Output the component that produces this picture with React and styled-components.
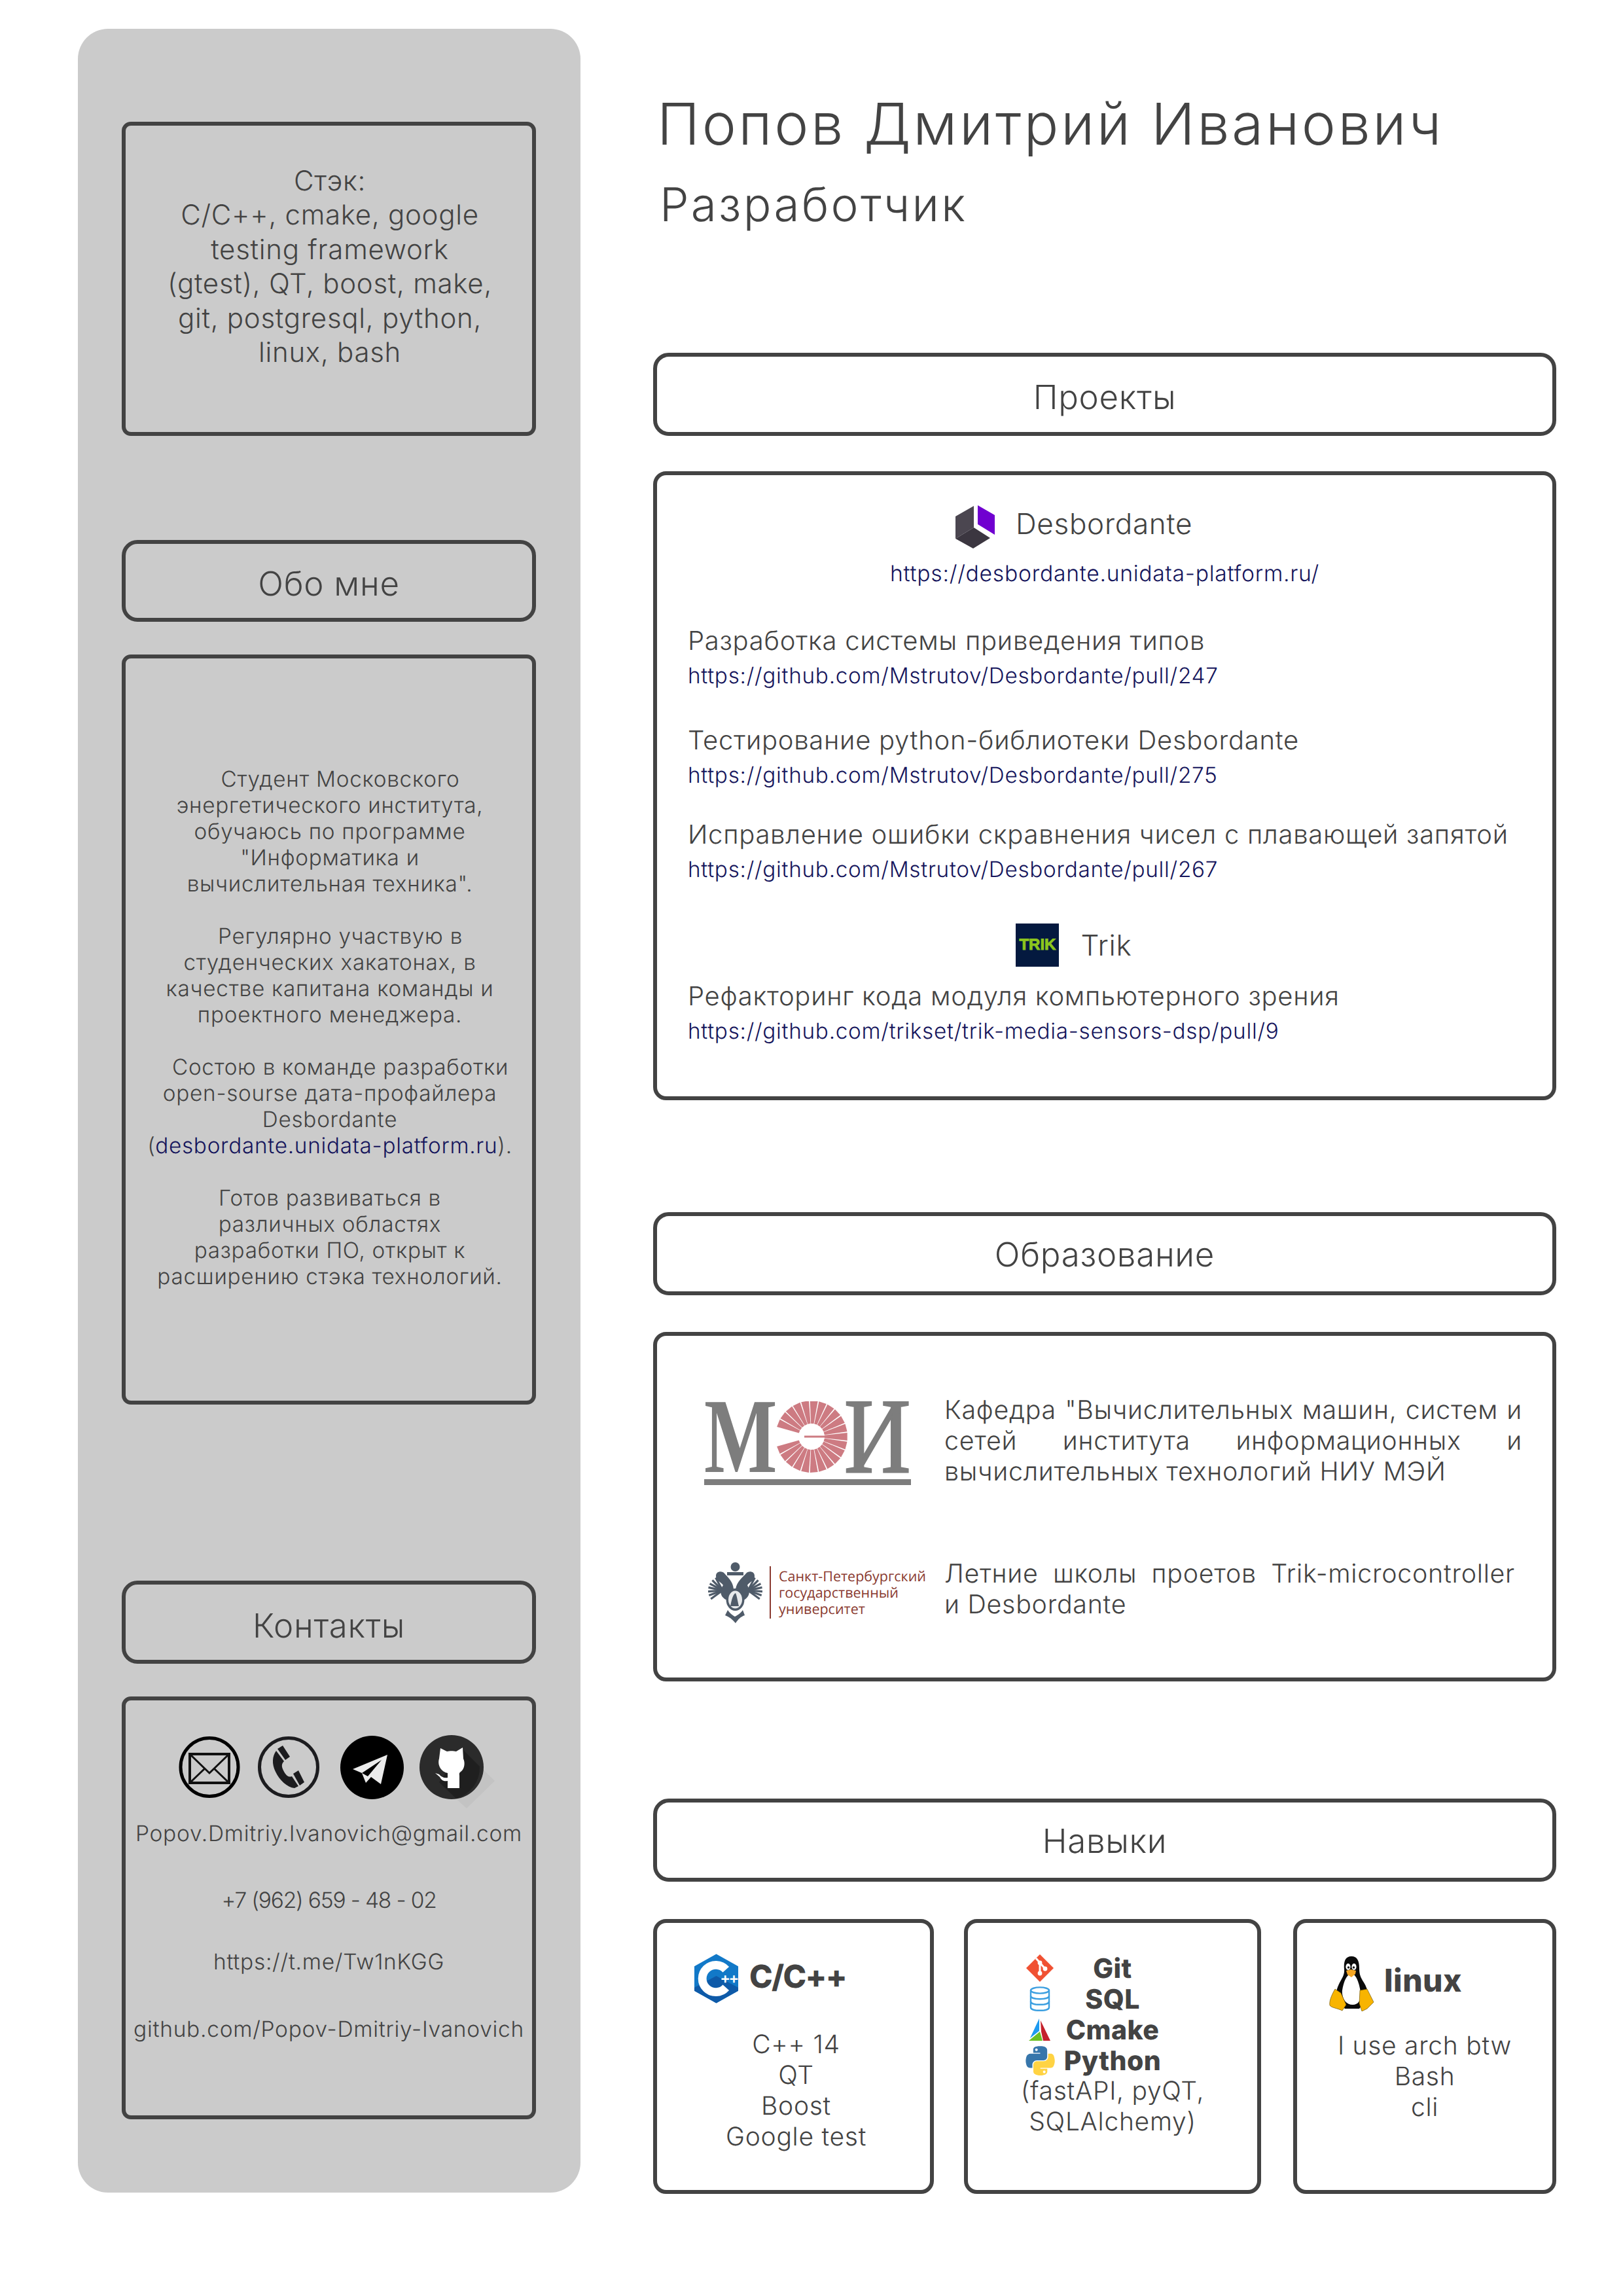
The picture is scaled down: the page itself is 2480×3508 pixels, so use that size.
import React from 'react'
import styled, { createGlobalStyle } from 'styled-components'

const INK = '#434343'
const NAVY = '#15155c'

const Global = createGlobalStyle`
  html, body { margin: 0; padding: 0; background: #fff; }
  body {
    font-family: Inter, "Noto Sans", "Liberation Sans", sans-serif;
    font-weight: 300;
    color: ${INK};
    letter-spacing: 0.045em;
    text-rendering: geometricPrecision;
  }
  * { box-sizing: border-box; }
`

const Page = styled.div`
  width: 2480px;
  height: 3508px;
  padding: 44px 0 0 119px;
  display: flex;
  align-items: flex-start;
  overflow: hidden;
`

const Sidebar = styled.aside`
  width: 768px;
  height: 3306px;
  flex: none;
  background: #cbcbcb;
  border-radius: 46px;
  padding: 142px 68px 0 67px;
  display: flex;
  flex-direction: column;
`

const Main = styled.main`
  width: 1380px;
  margin-left: 111px;
  flex: none;
  display: flex;
  flex-direction: column;
`

const Header = styled.header`
  height: 495px;
  padding: 96px 0 0 6px;
`

const Title = styled.h1`
  margin: 0;
  font-size: 88px;
  line-height: 100px;
  font-weight: 300;
  letter-spacing: 0.04em;
  white-space: nowrap;
`

const Subtitle = styled.h2`
  margin: 28px 0 0 4px;
  font-size: 71px;
  line-height: 90px;
  font-weight: 300;
  letter-spacing: 0.046em;
`

const Bar = styled.div`
  height: ${p => p.$h || 127}px;
  margin-top: ${p => p.$mt || 0}px;
  flex: none;
  border: 6px solid ${INK};
  border-radius: 24px;
  display: flex;
  align-items: center;
  justify-content: center;
  font-size: 51px;
  padding-top: ${p => p.$pt ?? 10}px;
`

const Panel = styled.section`
  height: ${p => p.$h}px;
  margin-top: ${p => p.$mt || 0}px;
  flex: none;
  border: 6px solid ${INK};
  border-radius: ${p => p.$r || 20}px;
`

const StackText = styled.div`
  padding: 59px 0 0 3px;
  text-align: center;
  font-size: 42px;
  line-height: 52.4px;
  white-space: nowrap;
`

const About = styled.div`
  padding: 165px 0 0 3px;
  text-align: center;
  font-size: 33.3px;
  line-height: 40px;
  white-space: nowrap;
`

const AboutPara = styled.p`
  margin: 0 0 40px;
  text-indent: ${p => p.$indent || 0}px;
`

const Anchor = styled.span`
  color: ${NAVY};
`

const IconRow = styled.div`
  display: flex;
  padding: 53px 0 0 81px;
  align-items: center;
`

const ContactIcon = styled.svg`
  width: ${p => p.$w || 94}px;
  height: ${p => p.$w || 94}px;
  margin-right: ${p => p.$gap || 0}px;
  flex: none;
  overflow: visible;
`

const ContactLine = styled.div`
  margin-top: ${p => p.$mt}px;
  height: 44px;
  line-height: 44px;
  text-align: center;
  font-size: 33.5px;
  letter-spacing: ${p => p.$ls || 'inherit'};
  white-space: nowrap;
`

const ProjectHead = styled.div`
  display: flex;
  align-items: center;
  justify-content: center;
  margin-top: ${p => p.$mt}px;
  height: ${p => p.$h}px;
  padding-right: 94px;
  gap: ${p => p.$gap}px;
  font-size: 44px;
`

const ProjectName = styled.span`
  margin-bottom: ${p => p.$mb || 0}px;
`

const SiteLink = styled.div`
  margin-top: 17px;
  line-height: 44px;
  text-align: center;
  font-size: 33.7px;
  color: ${NAVY};
`

const Task = styled.div`
  margin: ${p => p.$mt}px 0 0 47px;
`

const TaskTitle = styled.div`
  font-size: 40px;
  line-height: 50px;
  white-space: nowrap;
`

const TaskLink = styled.div`
  margin-top: 7px;
  font-size: 33.3px;
  line-height: 44px;
  color: ${NAVY};
  white-space: nowrap;
`

const EduRow = styled.div`
  display: grid;
  grid-template-columns: 439px 883px;
  margin-top: ${p => p.$mt}px;
`

const EduText = styled.div`
  margin-top: ${p => p.$mt || 0}px;
  font-size: 39.4px;
  line-height: 47px;
  text-align: justify;
`

const EduFullLine = styled.div`
  width: 872px;
  text-align: justify;
  text-align-last: justify;
  white-space: nowrap;
`

const MeiWrap = styled.svg`
  margin: 10px 0 0 72px;
  width: 316px;
  height: 128px;
  display: block;
`

const SpbuLogo = styled.div`
  display: flex;
  align-items: center;
  margin-left: 78px;
  height: 94px;
`

const Divider = styled.div`
  width: 2px;
  height: 80px;
  margin: 0 12px 0 11px;
  background: #8a3a30;
`

const SpbuName = styled.div`
  font-family: "Open Sans", sans-serif;
  font-weight: 400;
  font-size: 21.5px;
  line-height: 25px;
  letter-spacing: 0;
  color: #8a3a30;
  white-space: nowrap;
`

const SkillGrid = styled.div`
  display: flex;
  margin-top: 57px;
`

const SkillCard = styled.div`
  width: ${p => p.$w}px;
  height: 420px;
  margin-left: ${p => p.$ml || 0}px;
  flex: none;
  border: 6px solid ${INK};
  border-radius: 20px;
`

const SkillHead = styled.div`
  display: flex;
  align-items: center;
  padding: ${p => p.$pt}px 0 0 ${p => p.$pl}px;
  gap: ${p => p.$gap}px;
  font-size: 48px;
  font-weight: 800;
  letter-spacing: ${p => p.$ls};
  white-space: nowrap;
`

const SkillName = styled.span`
  margin-bottom: ${p => p.$mb}px;
`

const SkillList = styled.div`
  margin-top: ${p => p.$mt}px;
  padding-left: ${p => p.$pl || 0}px;
  text-align: center;
  font-size: 39px;
  line-height: 47px;
`

const ToolList = styled.div`
  padding: 44px 0 0 87px;
`

const ToolRow = styled.div`
  display: grid;
  grid-template-columns: 46px 176px;
  height: 47px;
  align-items: center;
  justify-items: center;
  font-size: 41px;
  font-weight: 800;
  letter-spacing: 0.01em;
  white-space: nowrap;
`

const ToolNote = styled.div`
  margin: 1px 0 0 -87px;
  text-align: center;
  font-size: 39px;
  line-height: 47px;
  white-space: nowrap;
`

const TrikBadge = styled.div`
  width: 66px;
  height: 66px;
  background: #04193f;
  color: #8cc51e;
  display: flex;
  align-items: center;
  justify-content: center;
  font-family: "Liberation Sans", sans-serif;
  font-weight: 700;
  font-size: 24px;
  letter-spacing: 0;
  -webkit-text-stroke: 1px #8cc51e;
`

const CppLogo = () => (
  <svg width="69" height="76" viewBox="0 0 70 76">
    <polygon points="35,0 69,19 69,57 35,76 1,57 1,19" fill="#1279c8" />
    <polygon points="1,52 35,34 69,52 69,57 35,76 1,57" fill="#0e5aa8" />
    <path d="M50 24 A21 21 0 1 0 50 52" fill="none" stroke="#fff" strokeWidth="13" />
    <text x="42" y="46" fontFamily="Liberation Sans" fontWeight="700" fontSize="22" letterSpacing="0" fill="#fff" textLength="27" lengthAdjust="spacingAndGlyphs">++</text>
  </svg>
)

const GitLogo = () => (
  <svg width="42" height="42" viewBox="0 0 42 42">
    <polygon points="21,0 42,21 21,42 0,21" fill="#f05133" />
    <path d="M15 6 L29 22 M21 13 V28" stroke="#fff" strokeWidth="3" fill="none" />
    <circle cx="21" cy="13" r="3.4" fill="#fff" />
    <circle cx="21" cy="29" r="3.4" fill="#fff" />
    <circle cx="29" cy="22" r="3.4" fill="#fff" />
  </svg>
)

const SqlLogo = () => (
  <svg width="32" height="38" viewBox="0 0 32 38" fill="none" stroke="#3c9fe0" strokeWidth="2.4">
    <ellipse cx="16" cy="6" rx="14" ry="4.6" />
    <path d="M2 6V32C2 35 8 36.8 16 36.8S30 35 30 32V6" />
    <path d="M2 14.5C2 17.5 8 19.2 16 19.2S30 17.5 30 14.5" />
    <path d="M2 23C2 26 8 27.8 16 27.8S30 26 30 23" />
  </svg>
)

const CmakeLogo = () => (
  <svg width="34" height="34" viewBox="0 0 34 34">
    <polygon points="16,0 16,19 2,30" fill="#1e9af0" />
    <polygon points="18,3 33,34 22,34 19,20" fill="#c4212b" />
    <polygon points="17,20 21,34 0,34" fill="#6cc024" />
  </svg>
)

const PythonLogo = () => (
  <svg width="45" height="45" viewBox="0 0 110 110">
    <path fill="#3776ab" d="M54.9 .9C50.3 .9 45.9 1.3 42.1 2 30.9 4 28.9 8.1 28.9 15.7v10h26v3.3H19.1c-7.6 0-14.2 4.6-16.3 13.2C.4 52.1 .3 58.3 2.8 68.7c1.8 7.7 6.3 13.2 13.9 13.2h9v-12c0-8.7 7.5-16.3 16.3-16.3h26c7.2 0 13-6 13-13.2V15.7c0-7.1-6-12.4-13-13.6C63 1.3 59.4 .9 54.9 .9zM40.8 9c2.7 0 4.9 2.2 4.9 5s-2.2 4.9-4.9 4.9c-2.7 0-4.9-2.2-4.9-4.9s2.2-5 4.9-5z" />
    <path fill="#ffd343" d="M84.7 29v11.6c0 9-7.6 16.5-16.3 16.5h-26c-7.1 0-13 6.1-13 13.2v24.8c0 7.1 6.1 11.2 13 13.2 8.3 2.4 16.2 2.9 26 0 6.6-1.9 13-5.7 13-13.2v-10h-26v-3.3h39c7.6 0 10.4-5.3 13-13.2 2.7-8.2 2.6-16 0-26.4-1.9-7.5-5.4-13.2-13-13.2h-9.7zM70.1 91.7c2.7 0 4.9 2.2 4.9 4.9 0 2.8-2.2 5-4.9 5-2.7 0-4.9-2.2-4.9-5 0-2.7 2.2-4.9 4.9-4.9z" />
  </svg>
)

const LinuxLogo = () => (
  <svg width="69" height="84" viewBox="0 0 69 84">
    <path fill="#0b0b0b" d="M34 0C24 0 22 9 23 20 24 30 17 36 13 47 10 55 10 62 14 68L24 80H46L58 66C61 58 58 48 53 40 48 32 46 28 46 18 46 7 43 0 34 0Z" />
    <path fill="#fff" d="M34 26C26 28 22 40 20 52 19 62 24 74 36 74 46 74 50 64 48 54 46 42 42 28 34 26Z" />
    <ellipse cx="29" cy="16" rx="3.6" ry="5" fill="#fff" />
    <ellipse cx="38" cy="16" rx="3.6" ry="5" fill="#fff" />
    <circle cx="29.5" cy="17" r="1.7" fill="#111" />
    <circle cx="37.5" cy="17" r="1.7" fill="#111" />
    <path fill="#f5a623" d="M26 22 33 20 41 22 40 27 34 32 28 28Z" />
    <path fill="#f8b400" stroke="#5a4500" strokeWidth=".6" d="M9 50 18 56 26 74 20 83C12 79 4 79 1 75 0 70 2 62 9 50Z" />
    <path fill="#f8b400" stroke="#5a4500" strokeWidth=".6" d="M47 52 58 50 63 60 68 70 58 80 50 84 46 72Z" />
  </svg>
)

const DesbordanteLogo = () => (
  <svg width="60" height="66" viewBox="0 0 60 66">
    <polygon points="0,17 28,1 28,34 0,51" fill="#4b4650" />
    <polygon points="0,51 28,34 53,50 27,66" fill="#3b3640" />
    <polygon points="34,0 60,15 60,45 34,29" fill="#7000d0" />
  </svg>
)

const MailIcon = () => (
  <ContactIcon viewBox="0 0 94 94" $gap={27}>
    <ellipse cx="47" cy="47" rx="44" ry="44.5" fill="none" stroke="#000" strokeWidth="5" />
    <rect x="17" y="27" width="60" height="44" fill="none" stroke="#111" strokeWidth="4" />
    <path d="M18 28 L47 56 L76 28 M18 70 L40 49 M76 70 L54 49" fill="none" stroke="#111" strokeWidth="3" />
  </ContactIcon>
)

const PhoneIcon = () => (
  <ContactIcon viewBox="0 0 94 94" $gap={32}>
    <ellipse cx="47" cy="47" rx="44.5" ry="44.5" fill="none" stroke="#1c1c1f" strokeWidth="5" />
    <path d="M28 22C22 30 21 42 27 54 33 67 45 78 56 79L62 76 52 61C47 63 43 60 39 52 36 46 36 42 40 38Z" fill="#1c1c1f" />
    <path d="M30 19 38 14 49 31 42 36ZM54 57 62 52 71 70 64 75Z" fill="#1c1c1f" />
  </ContactIcon>
)

const TelegramIcon = () => (
  <ContactIcon viewBox="0 0 97 97" $w={97} $gap={24}>
    <circle cx="48.5" cy="48.5" r="48.5" fill="#000" />
    <path d="M72 29 19 51 33 57 39 72 47 63 62 74Z" fill="#ececec" />
    <path d="M33 57 63 37 42 62" fill="#000" />
  </ContactIcon>
)

const GithubIcon = () => (
  <ContactIcon viewBox="0 0 98 98" $w={98}>
    <polygon points="66,22 115,70 72,112 24,68" fill="#000" opacity=".04" />
    <circle cx="49" cy="49" r="49" fill="#2b2b2b" />
    <path d="M66 22 92 48A49 49 0 0 1 56 97L30 72Z" fill="#1f1f1f" />
    <path fill="#fff" d="M32 20 42 25C46 24 52 24 56 25L66 19 67 36C70 42 69 52 63 56 60 58 61 60 61 62V81H43V70C38 71 34 70 31 64L24 58 30 60C33 64 38 66 43 65V58C33 56 27 46 30 36Z" />
  </ContactIcon>
)

const sunWedges = Array.from({ length: 23 }, (_, i) => {
  const step = 330 / 23
  const from = 195 + i * step + 0.9
  const to = 195 + (i + 1) * step - 0.9
  const pt = (r, a) => {
    const rad = (a * Math.PI) / 180
    return `${(r * Math.cos(rad)).toFixed(1)},${(r * Math.sin(rad)).toFixed(1)}`
  }
  return [pt(20, from), pt(55, from), pt(55, to), pt(20, to)].join(' ')
})

const MeiLogo = () => (
  <MeiWrap viewBox="0 0 316 128">
    <text x="0" y="108" fontFamily="Liberation Serif" fontWeight="700" fontSize="163" fill="#7d7d7d" textLength="112" lengthAdjust="spacingAndGlyphs">М</text>
    <text x="214" y="108" fontFamily="Liberation Serif" fontWeight="400" fontSize="163" stroke="#7d7d7d" strokeWidth="3" fill="#7d7d7d" textLength="102" lengthAdjust="spacingAndGlyphs">И</text>
    <g transform="translate(164 54)">
      {sunWedges.map((p, i) => <polygon key={i} points={p} fill="#cd7b82" />)}
      <rect x="-11" y="-1.5" width="64" height="3" fill="#cd7b82" />
    </g>
    <rect x="0" y="119" width="316" height="9" fill="#7d7d7d" />
  </MeiWrap>
)

const feathers = [-62, -45, -28, -12, 4, 20, 36]

const SpbuCrest = () => (
  <svg width="83" height="94" viewBox="0 0 83 94">
    <g stroke="#4f5b69" strokeWidth="3.2" fill="none">
      {feathers.map(a => (
        <g key={a}>
          <path d={`M22 44 L${22 - 22 * Math.cos((a * Math.PI) / 180)} ${44 + 22 * Math.sin((a * Math.PI) / 180)}`} />
          <path d={`M61 44 L${61 + 22 * Math.cos((a * Math.PI) / 180)} ${44 + 22 * Math.sin((a * Math.PI) / 180)}`} />
        </g>
      ))}
    </g>
    <g fill="#4f5b69">
      <circle cx="41.5" cy="8" r="7" />
      <rect x="29" y="16" width="25" height="5" />
      <path d="M12 22C12 14 22 14 25 18 30 24 38 30 39 42L42 42C44 30 53 24 58 18 61 14 71 14 71 22 71 30 64 30 60 36 66 46 62 54 56 58L27 58C20 54 16 46 23 36 19 30 12 30 12 22Z" />
      <ellipse cx="41.5" cy="58" rx="14" ry="17" />
      <path d="M30 74C34 80 38 82 41 84 44 82 49 80 53 74L56 82C50 84 46 88 42 94 37 88 32 84 26 82Z" />
    </g>
    <ellipse cx="41.5" cy="58" rx="10.5" ry="13.5" fill="#e8eaec" />
    <path d="M34 68C36 58 38 50 42 48 44 52 45 60 47 68Z" fill="#4f5b69" />
  </svg>
)

export default function App() {
  return (
    <>
      <Global />
      <Page>
        <Sidebar>
          <Panel $h={480} $r={14}>
            <StackText>
              Стэк:<br />
              C/C++, cmake, google<br />
              testing framework<br />
              (gtest), QT, boost, make,<br />
              git, postgresql, python,<br />
              linux, bash
            </StackText>
          </Panel>
          <Bar $mt={159} $h={125}>Обо мне</Bar>
          <Panel $mt={50} $h={1146} $r={14}>
            <About>
              <AboutPara $indent={32}>Студент Московского<br />энергетического института,<br />обучаюсь по программе<br />"Информатика и<br />вычислительная техника".</AboutPara>
              <AboutPara $indent={32}>Регулярно участвую в<br />студенческих хакатонах, в<br />качестве капитана команды и<br />проектного менеджера.</AboutPara>
              <AboutPara $indent={32}>Состою в команде разработки<br />open-sourse дата-профайлера<br />Desbordante<br />(<Anchor>desbordante.unidata-platform.ru</Anchor>).</AboutPara>
              <AboutPara>Готов развиваться в<br />различных областях<br />разработки ПО, открыт к<br />расширению стэка технологий.</AboutPara>
            </About>
          </Panel>
          <Bar $mt={269} $pt={12}>Контакты</Bar>
          <Panel $mt={50} $h={646} $r={14}>
            <IconRow>
              <MailIcon />
              <PhoneIcon />
              <TelegramIcon />
              <GithubIcon />
            </IconRow>
            <ContactLine $mt={31}>Popov.Dmitriy.Ivanovich@gmail.com</ContactLine>
            <ContactLine $mt={58} $ls="-0.035em">+7 (962) 659 - 48 - 02</ContactLine>
            <ContactLine $mt={50}>https://t.me/Tw1nKGG</ContactLine>
            <ContactLine $mt={59}>github.com/Popov-Dmitriy-Ivanovich</ContactLine>
          </Panel>
        </Sidebar>
        <Main>
          <Header>
            <Title>Попов Дмитрий Иванович</Title>
            <Subtitle>Разработчик</Subtitle>
          </Header>
          <Bar>Проекты</Bar>
          <Panel $mt={54} $h={961}>
            <ProjectHead $mt={46} $h={66} $gap={32}>
              <DesbordanteLogo />
              <ProjectName $mb={10}>Desbordante</ProjectName>
            </ProjectHead>
            <SiteLink>https://desbordante.unidata-platform.ru/</SiteLink>
            <Task $mt={55}>
              <TaskTitle>Разработка системы приведения типов</TaskTitle>
              <TaskLink>https://github.com/Mstrutov/Desbordante/pull/247</TaskLink>
            </Task>
            <Task $mt={51}>
              <TaskTitle>Тестирование python-библиотеки Desbordante</TaskTitle>
              <TaskLink>https://github.com/Mstrutov/Desbordante/pull/275</TaskLink>
            </Task>
            <Task $mt={43}>
              <TaskTitle>Исправление ошибки скравнения чисел с плавающей запятой</TaskTitle>
              <TaskLink>https://github.com/Mstrutov/Desbordante/pull/267</TaskLink>
            </Task>
            <ProjectHead $mt={60} $h={66} $gap={33}>
              <TrikBadge>TRIK</TrikBadge>
              <ProjectName>Trik</ProjectName>
            </ProjectHead>
            <Task $mt={20}>
              <TaskTitle>Рефакторинг кода модуля компьютерного зрения</TaskTitle>
              <TaskLink>https://github.com/trikset/trik-media-sensors-dsp/pull/9</TaskLink>
            </Task>
          </Panel>
          <Bar $mt={171} $pt={4}>Образование</Bar>
          <Panel $mt={56} $h={534}>
            <EduRow $mt={90}>
              <MeiLogo />
              <EduText>Кафедра "Вычислительных машин, систем и сетей института информационных и вычислительных технологий НИУ МЭЙ</EduText>
            </EduRow>
            <EduRow $mt={114}>
              <SpbuLogo>
                <SpbuCrest />
                <Divider />
                <SpbuName>Санкт-Петербургский<br />государственный<br />университет</SpbuName>
              </SpbuLogo>
              <EduText $mt={-5}>
                <EduFullLine>Летние школы проетов Trik-microcontroller</EduFullLine>
                и Desbordante
              </EduText>
            </EduRow>
          </Panel>
          <Bar $mt={179} $pt={4}>Навыки</Bar>
          <SkillGrid>
            <SkillCard $w={429}>
              <SkillHead $pt={47} $pl={56} $gap={16} $ls="-0.035em">
                <CppLogo />
                <SkillName $mb={8}>C/C++</SkillName>
              </SkillHead>
              <SkillList $mt={39} $pl={8}>C++ 14<br />QT<br />Boost<br />Google test</SkillList>
            </SkillCard>
            <SkillCard $w={454} $ml={46}>
              <ToolList>
                <ToolRow><GitLogo />Git</ToolRow>
                <ToolRow><SqlLogo />SQL</ToolRow>
                <ToolRow><CmakeLogo />Cmake</ToolRow>
                <ToolRow><PythonLogo />Python</ToolRow>
                <ToolNote>(fastAPI, pyQT,<br />SQLAlchemy)</ToolNote>
              </ToolList>
            </SkillCard>
            <SkillCard $w={402} $ml={49}>
              <SkillHead $pt={51} $pl={49} $gap={15} $ls="0.01em">
                <LinuxLogo />
                <SkillName $mb={12}>linux</SkillName>
              </SkillHead>
              <SkillList $mt={29}>I use arch btw<br />Bash<br />cli</SkillList>
            </SkillCard>
          </SkillGrid>
        </Main>
      </Page>
    </>
  )
}
